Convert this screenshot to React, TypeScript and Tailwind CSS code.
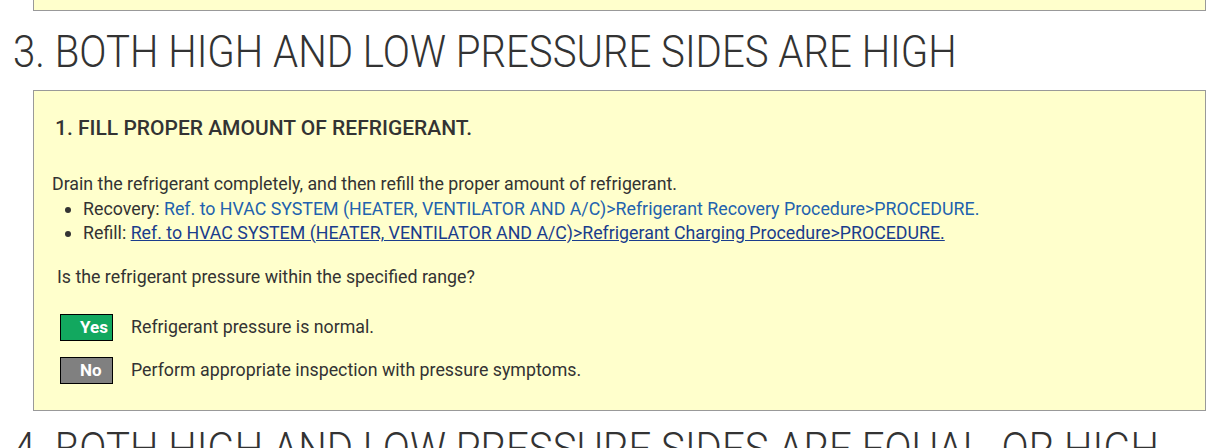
export default function App() {
  return (
    <div className="min-h-screen bg-white pl-[13px] pr-[17px] font-['Roboto',sans-serif] text-[#333]">
      <div className="ml-[20px] h-[11px] border border-t-0 border-[#999] bg-[#ffffcc]" />

      <h1 className="mt-[17px] origin-left scale-x-[0.913] whitespace-nowrap text-[44px] leading-[48px] font-light">
        3. BOTH HIGH AND LOW PRESSURE SIDES ARE HIGH
      </h1>

      <div className="ml-[20px] mt-[14px] border border-[#999] bg-[#ffffcc] pb-[26px] pl-[18px] pt-[23px]">
        <h2 className="ml-[3px] text-[21px] leading-[28px] font-medium">
          1. FILL PROPER AMOUNT OF REFRIGERANT.
        </h2>

        <div className="mt-[30px] text-[17.8px] leading-[24.5px]">
          <p>Drain the refrigerant completely, and then refill the proper amount of refrigerant.</p>
          <ul className="list-disc pl-[31px]">
            <li>
              Recovery:{" "}
              <a className="text-[#2262ae]">
                Ref. to HVAC SYSTEM (HEATER, VENTILATOR AND A/C)&gt;Refrigerant Recovery Procedure&gt;PROCEDURE.
              </a>
            </li>
            <li>
              Refill:{" "}
              <a className="text-[#1a3d8c] underline">
                Ref. to HVAC SYSTEM (HEATER, VENTILATOR AND A/C)&gt;Refrigerant Charging Procedure&gt;PROCEDURE.
              </a>
            </li>
          </ul>
        </div>

        <p className="ml-[5px] mt-[19px] text-[17.8px] leading-[24.5px]">
          Is the refrigerant pressure within the specified range?
        </p>

        <div className="ml-[8px] mt-[25px] flex flex-col gap-[16px] text-[17.8px]">
          <div className="flex items-center">
            <span className="flex h-[27px] w-[53px] items-center border border-black bg-[#12a85f] pl-[19px] text-[17px] font-bold text-white">
              Yes
            </span>
            <span className="ml-[18px]">Refrigerant pressure is normal.</span>
          </div>
          <div className="flex items-center">
            <span className="flex h-[27px] w-[53px] items-center border border-black bg-[#808080] pl-[19px] text-[17px] font-bold text-white">
              No
            </span>
            <span className="ml-[18px]">Perform appropriate inspection with pressure symptoms.</span>
          </div>
        </div>
      </div>

      <h1 className="mt-[14px] origin-left scale-x-[0.913] whitespace-nowrap text-[44px] leading-[48px] font-light">
        4. BOTH HIGH AND LOW PRESSURE SIDES ARE EQUAL, OR HIGH
      </h1>
    </div>
  );
}
